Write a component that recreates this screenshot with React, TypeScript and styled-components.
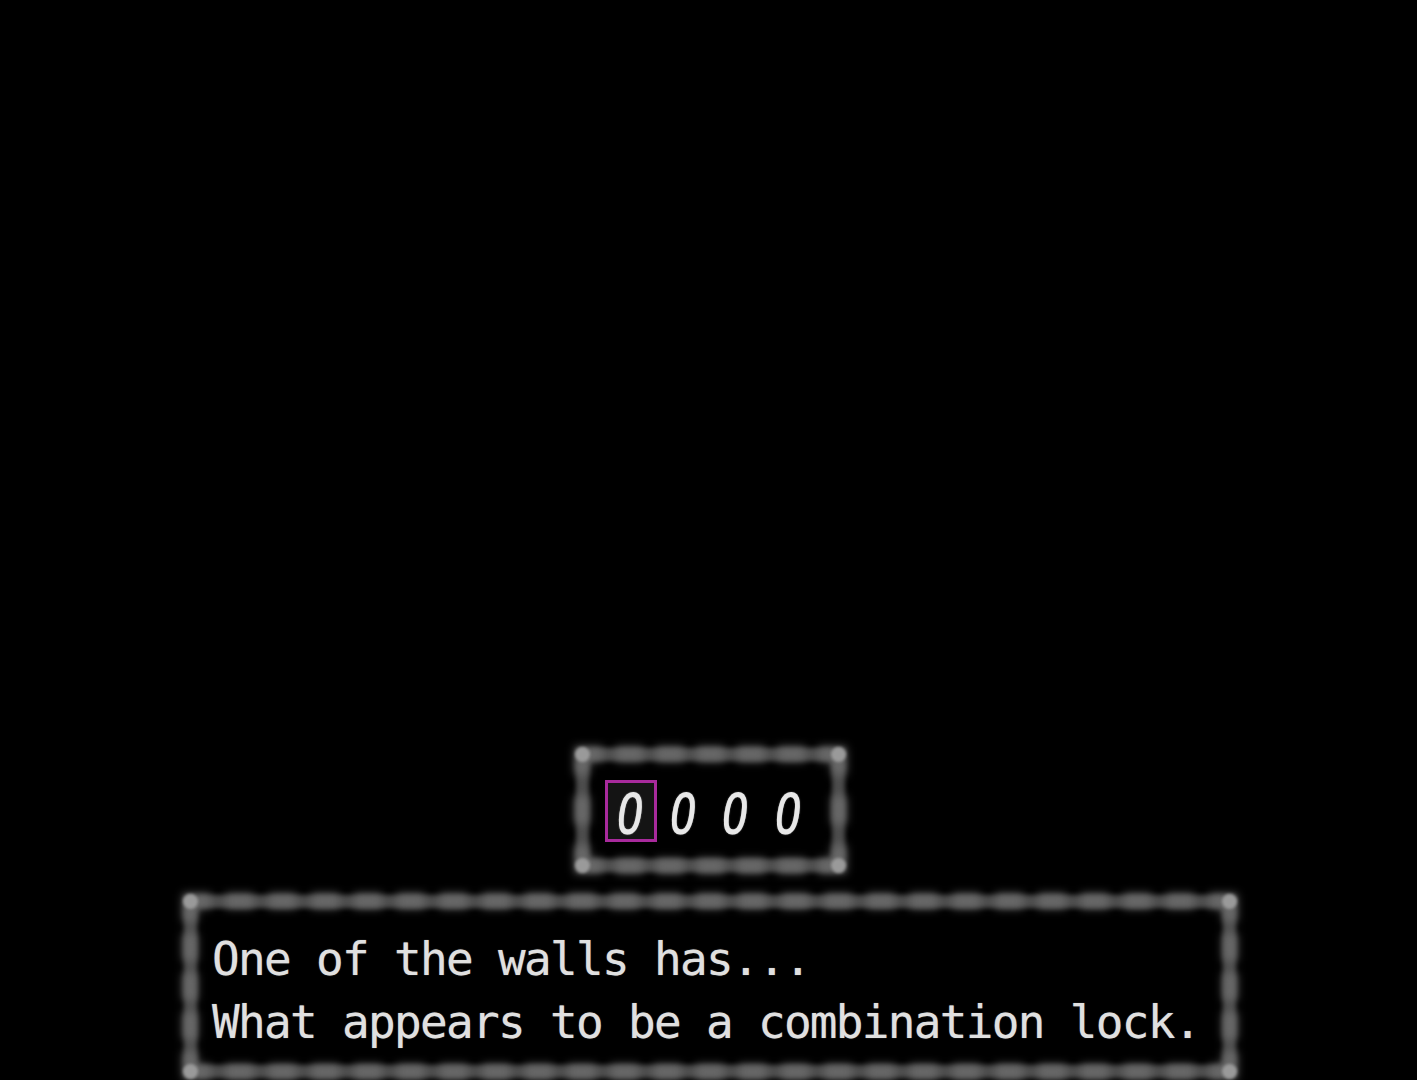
import React from 'react';
import styled, { createGlobalStyle } from 'styled-components';

const GlobalStyle = createGlobalStyle`
  html, body {
    margin: 0;
    padding: 0;
    background: #000;
  }
  #root {
    height: 100%;
  }
`;

const Screen = styled.div`
  width: 1417px;
  height: 1080px;
  background: #000;
  display: flex;
  flex-direction: column;
  align-items: center;
  justify-content: flex-end;
  padding-bottom: 2px;
  padding-left: 3px;
  box-sizing: border-box;
  overflow: hidden;
  font-family: 'DejaVu Sans Mono', 'Liberation Mono', monospace;
  color: #e0e0e0;
`;

// window with the fuzzy, blotchy border the game draws
const Frame = styled.div`
  position: relative;
  box-sizing: border-box;
  border: 12px solid transparent;
  background: #000;

  &::before,
  &::after {
    content: '';
    position: absolute;
    pointer-events: none;
  }
  &::before {
    inset: -12px;
    border: 13px solid #4c4c4c;
    filter: blur(2.5px);
  }
  &::after {
    inset: -13px;
    border: 14px dashed #6a6a6a;
    filter: blur(5px);
  }
`;

const Corner = styled.span<{ $x: 'left' | 'right'; $y: 'top' | 'bottom' }>`
  position: absolute;
  width: 15px;
  height: 15px;
  border-radius: 50%;
  background: #9a9a9a;
  filter: blur(1.5px);
  z-index: 1;
  ${p => (p.$x === 'left' ? 'left: -13px;' : 'right: -13px;')}
  ${p => (p.$y === 'top' ? 'top: -13px;' : 'bottom: -13px;')}
`;

const LockFrame = styled(Frame)`
  width: 269px;
  height: 124px;
  padding: 20px 0 0 17px;
  margin-bottom: 23px;
`;

const Digits = styled.div`
  display: flex;
  position: relative;
  z-index: 2;
`;

const Digit = styled.div<{ $active?: boolean }>`
  width: 52.5px;
  height: 62px;
  box-sizing: border-box;
  display: flex;
  align-items: center;
  justify-content: center;
  border: 3px solid ${p => (p.$active ? '#a82a9c' : 'transparent')};
  background: ${p => (p.$active ? '#141414' : 'transparent')};
`;

const Glyph = styled.span`
  display: block;
  font-family: 'Noto Sans', 'Liberation Sans', sans-serif;
  font-size: 58px;
  font-weight: 500;
  line-height: 1;
  margin-top: 2px;
  color: #e8e8e8;
  transform: skewX(-8deg) scaleX(0.78);
  text-shadow: 0 0 1.5px rgba(255, 255, 255, 0.6);
`;

const DialogFrame = styled(Frame)`
  width: 1052px;
  height: 183px;
  padding: 21px 0 0 16px;
`;

const Message = styled.div`
  position: relative;
  z-index: 2;
  font-size: 46px;
  letter-spacing: -1.7px;
  line-height: 63px;
  white-space: pre;
  text-shadow: 0 0 1px rgba(255, 255, 255, 0.5);
`;

const Corners: React.FC = () => (
  <>
    <Corner $x="left" $y="top" />
    <Corner $x="right" $y="top" />
    <Corner $x="left" $y="bottom" />
    <Corner $x="right" $y="bottom" />
  </>
);

export default function App() {
  const code = [0, 0, 0, 0];
  const cursor = 0;

  return (
    <>
      <GlobalStyle />
      <Screen>
        <LockFrame>
          <Corners />
          <Digits>
            {code.map((d, i) => (
              <Digit key={i} $active={i === cursor}>
                <Glyph>{d}</Glyph>
              </Digit>
            ))}
          </Digits>
        </LockFrame>
        <DialogFrame>
          <Corners />
          <Message>
            {'One of the walls has...\nWhat appears to be a combination lock.'}
          </Message>
        </DialogFrame>
      </Screen>
    </>
  );
}
